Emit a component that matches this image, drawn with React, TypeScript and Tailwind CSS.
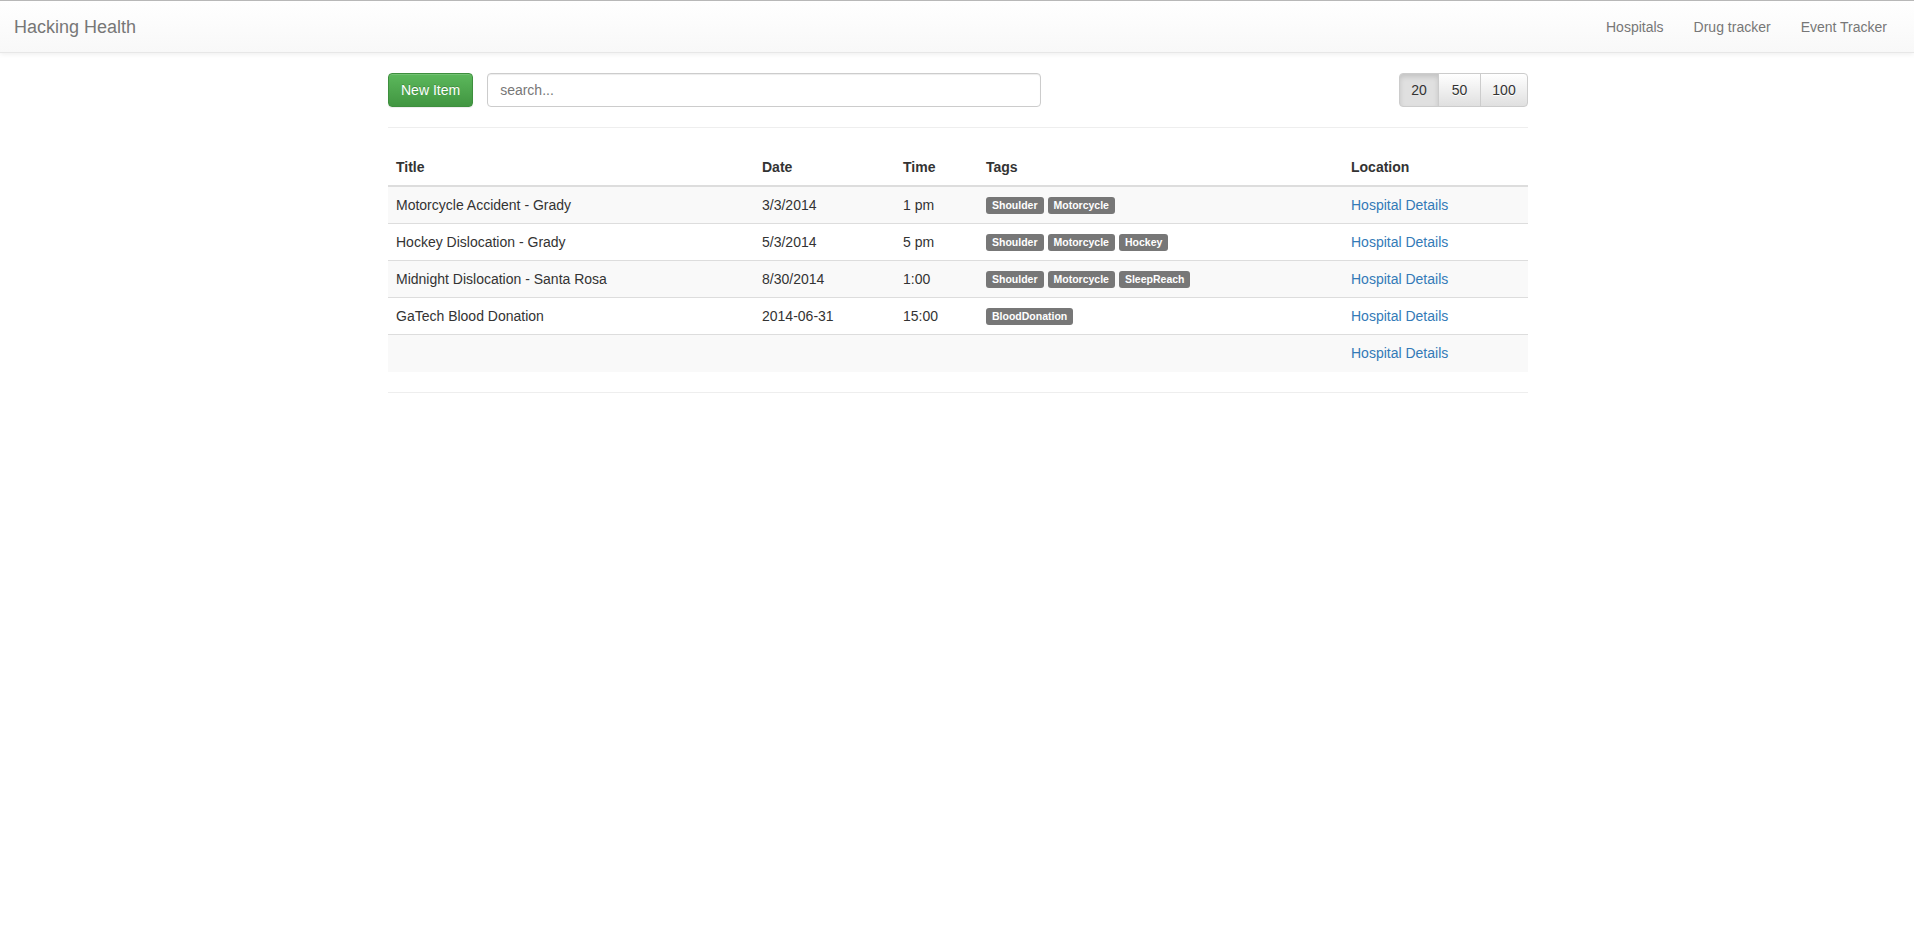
import React from "react";

const rows = [
  { title: "Motorcycle Accident - Grady", date: "3/3/2014", time: "1 pm", tags: ["Shoulder", "Motorcycle"] },
  { title: "Hockey Dislocation - Grady", date: "5/3/2014", time: "5 pm", tags: ["Shoulder", "Motorcycle", "Hockey"] },
  { title: "Midnight Dislocation - Santa Rosa", date: "8/30/2014", time: "1:00", tags: ["Shoulder", "Motorcycle", "SleepReach"] },
  { title: "GaTech Blood Donation", date: "2014-06-31", time: "15:00", tags: ["BloodDonation"] },
  { title: "", date: "", time: "", tags: [] as string[] },
];

export default function App() {
  return (
    <div className="min-h-[936px] bg-white text-[14px] leading-[20px] text-[#333] font-['Liberation_Sans',Arial,sans-serif]">
      <nav className="flex h-[53px] items-stretch justify-between border-t border-t-[#b8b8b8] border-b border-b-[#e7e7e7] bg-gradient-to-b from-white to-[#f8f8f8] shadow-[0_1px_5px_rgba(0,0,0,0.075)]">
        <a className="flex items-center pl-[14px] text-[18px] leading-[20px] text-[#777]">Hacking Health</a>
        <ul className="flex items-center pr-[12px]">
          {["Hospitals", "Drug tracker", "Event Tracker"].map((l) => (
            <li key={l} className="px-[15px] text-[#777]">{l}</li>
          ))}
        </ul>
      </nav>

      <div className="mx-auto mt-[20px] w-[1140px] translate-x-px">
        <div className="flex items-center justify-between">
          <div className="flex items-center gap-[14px]">
            <button className="h-[34px] rounded-[4px] border border-[#3e8f3e] bg-gradient-to-b from-[#5cb85c] to-[#419641] px-[12px] text-[14px] text-white [text-shadow:0_-1px_0_rgba(0,0,0,0.2)] shadow-[inset_0_1px_0_rgba(255,255,255,0.15),0_1px_1px_rgba(0,0,0,0.075)]">
              New Item
            </button>
            <input
              placeholder="search..."
              className="h-[34px] w-[554px] rounded-[4px] border border-[#ccc] px-[12px] text-[14px] text-[#555] placeholder:text-[#777] shadow-[inset_0_1px_1px_rgba(0,0,0,0.075)] outline-none"
            />
          </div>
          <div className="flex h-[34px]">
            <button className="w-[40px] rounded-l-[4px] border border-[#ccc] bg-[#e0e0e0] text-[#333] shadow-[inset_0_3px_5px_rgba(0,0,0,0.125)]">20</button>
            <button className="-ml-px w-[43px] border border-[#ccc] bg-gradient-to-b from-white to-[#e0e0e0] text-[#333] [text-shadow:0_1px_0_#fff]">50</button>
            <button className="-ml-px w-[48px] rounded-r-[4px] border border-[#ccc] bg-gradient-to-b from-white to-[#e0e0e0] text-[#333] [text-shadow:0_1px_0_#fff]">100</button>
          </div>
        </div>

        <div className="mt-[20px] border-t border-[#eee]" />

        <table className="mt-[20px] w-full table-fixed border-collapse">
          <colgroup>
            <col className="w-[366px]" />
            <col className="w-[141px]" />
            <col className="w-[83px]" />
            <col className="w-[365px]" />
            <col />
          </colgroup>
          <thead>
            <tr>
              {["Title", "Date", "Time", "Tags", "Location"].map((h) => (
                <th key={h} className="border-b-2 border-[#ddd] px-[8px] pt-[9px] pb-[8px] text-left font-bold">{h}</th>
              ))}
            </tr>
          </thead>
          <tbody>
            {rows.map((r, i) => (
              <tr key={i} className={i % 2 === 0 ? "bg-[#f9f9f9]" : "bg-white"}>
                <td className="h-[37px] border-t border-[#ddd] p-[8px]">{r.title}</td>
                <td className="border-t border-[#ddd] p-[8px]">{r.date}</td>
                <td className="border-t border-[#ddd] p-[8px]">{r.time}</td>
                <td className="border-t border-[#ddd] p-[8px]">
                  <div className="flex gap-[4px] pt-px">
                    {r.tags.map((t) => (
                      <span key={t} className="inline-block rounded-[3px] bg-[#777] px-[6px] pt-[2px] pb-[3px] text-[10.5px] font-bold leading-[12px] text-white">{t}</span>
                    ))}
                  </div>
                </td>
                <td className="border-t border-[#ddd] p-[8px] text-[#337ab7]">Hospital Details</td>
              </tr>
            ))}
          </tbody>
        </table>

        <div className="mt-[20px] border-t border-[#eee]" />
      </div>
    </div>
  );
}
